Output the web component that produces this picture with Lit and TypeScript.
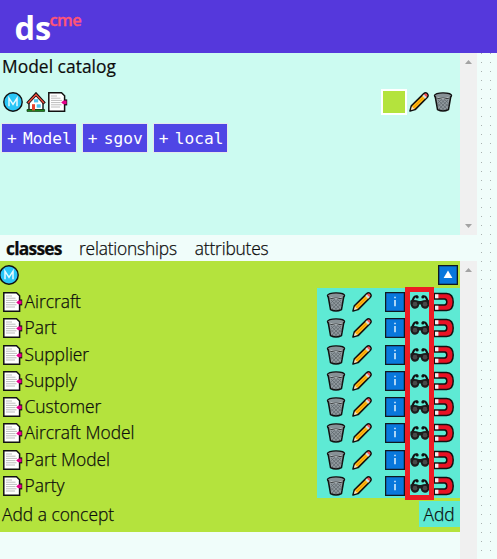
import { LitElement, html, css, svg } from "lit";
import { customElement, property } from "lit/decorators.js";

const glyphs: Record<string, any> = {
  doc: svg`<path d="M.8 .8H13.5L16.6 3.8V19.2H.8Z" fill="#fff" stroke="#111" stroke-width="1.5"/>
    <path d="M3 4H9M3 6.2H12.5M3 8.4H14M3 10.6H12.5M3 12.8H13.5M3 15H12" stroke="#bdbdbd" stroke-width="1"/>
    <path d="M16.6 7.4H19.2V13.4H16.6Z" fill="#111"/><path d="M13.2 10.4L15.4 8.6H18.6V12.2H15.4Z" fill="#e6008a"/>`,
  model: svg`<circle cx="10" cy="10" r="9.2" fill="#2ac6f7" stroke="#111" stroke-width="1.4"/>
    <path d="M6 14.3V6.2L10 12.3L14 6.2V14.3" fill="none" stroke="#e6faff" stroke-width="1.5"/>`,
  house: svg`<path d="M3 10.5L10 3.2L17 10.5V18H3Z" fill="#fff" stroke="#111" stroke-width="1.4"/>
    <path d="M1.4 11.5L10 2.2L18.6 11.5" fill="none" stroke="#111" stroke-width="3.2"/>
    <path d="M2 11L10 2.6L18 11" fill="none" stroke="#ef4b3c" stroke-width="1.5"/>
    <path d="M1 17.5H18.6V19.4H1Z" fill="#1e8a1e" stroke="#123c12" stroke-width=".8"/>
    <rect x="6" y="12.2" width="3" height="6.2" fill="#e8442e"/>
    <rect x="10.7" y="12.3" width="4" height="3.4" fill="#4cc3f0"/><rect x="8" y="7.2" width="4.2" height="3.2" fill="#4cc3f0"/>`,
  trash: svg`<path d="M2.2 4.5L4.5 17.5Q10 20.5 15.5 17.5L17.8 4.5Z" fill="#8f989d" stroke="#111" stroke-width="1.5"/>
    <path d="M5 8L14.5 17.5M8 7.5L15.6 14.8M11.5 7.5L16.2 11.8M4.8 11.5L11.2 18M15 8L5.5 17.5M12 7.5L4.6 14.8M8.5 7.5L4 11.8M15.2 11.5L8.8 18" stroke="#5d666b" stroke-width=".7"/>
    <ellipse cx="10" cy="3.6" rx="8.6" ry="2.8" fill="#879196" stroke="#111" stroke-width="1.3"/>
    <path d="M3 5Q10 8 17 5" fill="none" stroke="#b4bcc0" stroke-width="1"/>`,
  pencil: svg`<path d="M1 19L2.4 13.8L14.8 1.6Q16.5 .2 18.3 1.7Q19.8 3.5 18.4 5.2L6.1 17.6Z" fill="#ffb812" stroke="#111" stroke-width="1.6" stroke-linejoin="round"/>
    <path d="M2.9 14.5L5.4 17L1.9 18.1Z" fill="#f5e2cf"/>
    <path d="M13.3 3.9L15 2.2L17.8 5L16.1 6.7Z" fill="#d5dce0"/>
    <path d="M15 2.4Q16.6 .9 17.9 2.1Q19.1 3.5 17.6 5Z" fill="#f04858"/>
    <path d="M4.6 15.4L13.8 6.2" stroke="#f09000" stroke-width=".8"/>`,
  info: svg`<rect x=".6" y=".6" width="18.8" height="18.8" fill="#0877dc" stroke="#101820" stroke-width="1.3"/>
    <path d="M10 8V14.2M10 4.8V6.3" stroke="#d4ebfc" stroke-width="1.6"/>`,
  up: svg`<rect x=".6" y=".6" width="18.8" height="18.8" fill="#0877dc" stroke="#101820" stroke-width="1.4"/><path d="M10 5.6L14.4 13H5.6Z" fill="#fff"/>`,
  glasses: svg`<path d="M1.8 10L4 5.4Q4.8 3.8 7.4 4.4M18.2 10L16 5.4Q15.2 3.8 12.6 4.4" fill="none" stroke="#111" stroke-width="2.2"/>
    <circle cx="7.2" cy="5" r="1.5" fill="#111"/><circle cx="12.8" cy="5" r="1.5" fill="#111"/>
    <path d="M.4 8.4Q5 7.2 9 9H11Q15 7.2 19.6 8.4V12Q18.6 16.9 14.8 16.7Q11.2 16.4 10.8 12.6H9.2Q8.8 16.4 5.2 16.7Q1.4 16.9 .4 12Z" fill="#1c1c1c"/>
    <ellipse cx="5" cy="12.2" rx="2.3" ry="2.4" fill="#484848"/><ellipse cx="15" cy="12.2" rx="2.3" ry="2.4" fill="#484848"/>`,
  magnet: svg`<path d="M.6 1.4H12.6Q19.2 1.8 19.2 10Q19.2 18.2 12.6 18.6H.6V13H10.6Q12.8 12.8 12.8 10Q12.8 7.2 10.6 7H.6Z" fill="#e81224" stroke="#111" stroke-width="1.5"/>
    <path d="M1 2.2H4.4V6.2H1ZM1 13.8H4.4V17.8H1Z" fill="#eef1f3"/>`,
};

@customElement("ui-icon")
export class UiIcon extends LitElement {
  @property() name = "doc";
  static styles = css`
    :host { display: block; width: 20px; height: 20px; flex: none; }
    svg { display: block; width: 20px; height: 20px; }
  `;
  render() {
    return html`<svg viewBox="0 0 20 20">${glyphs[this.name]}</svg>`;
  }
}

@customElement("scroll-track")
export class ScrollTrack extends LitElement {
  @property({ type: Boolean }) down = false;
  static styles = css`
    :host { display: flex; flex-direction: column; justify-content: space-between; align-items: center;
      width: 17px; flex: none; background: #f0f0f0; }
    svg { display: block; width: 17px; height: 17px; }
  `;
  render() {
    return html`<svg viewBox="0 0 17 17"><path d="M5 11L8.5 7L12 11Z" fill="#a3a3a3" /></svg>
      ${this.down ? html`<svg viewBox="0 0 17 17"><path d="M5 6L8.5 10L12 6Z" fill="#a3a3a3" /></svg>` : ""}`;
  }
}

@customElement("app-root")
export class AppRoot extends LitElement {
  static styles = css`
    :host { display: flex; flex-direction: column; width: 497px; height: 559px; overflow: hidden;
      background: #f0fdfa; color: #0c0c0c; font-family: "Open Sans", "Noto Sans", sans-serif; font-size: 17.4px; }
    * { box-sizing: border-box; }
    header { display: flex; height: 53px; flex: none; padding-left: 14.5px; background: #5538dc; color: #fff; }
    .brand { width: 35px; font-size: 32.5px; font-weight: 700; line-height: 56px; }
    .sup { font-size: 16.5px; font-weight: 600; line-height: 40px; letter-spacing: -.6px; color: #ff5576; -webkit-text-stroke: .3px; }
    .body { display: flex; flex: 1; }
    .side { display: flex; flex-direction: column; width: 477px; }
    .catalog { display: flex; height: 182px; flex: none; }
    .panel { flex: 1; background: #ccfbf1; }
    .title { height: 28px; padding-left: 2px; line-height: 27px; letter-spacing: .03px; -webkit-text-stroke: .2px; }
    .tools { display: flex; align-items: center; height: 42px; padding: 0 7px 0 3px; }
    .tools ui-icon { margin-right: 2.5px; }
    .swatch { width: 26px; height: 26px; margin: -1px 1px 0 auto; border: 2px solid #fff; background: #b4e33d; }
    .tools .end { margin: 0 0 0 4px; }
    .tools .first { margin-left: 1px; }
    .buttons { display: flex; gap: 5px; padding: 0 0 0 1px; }
    .btn { display: flex; height: 30px; border: 1px solid #e5e7eb; background: #4f46e5; color: #fff; padding: 0 4px 0 5px;
      font: 16.2px/29px "DejaVu Sans Mono", monospace; }
    .plus { width: 16px; }
    .tabs { display: flex; height: 26px; flex: none; padding-left: 6px; gap: 18px; line-height: 27px; font-weight: 300;
      letter-spacing: -.2px; -webkit-text-stroke: .25px; }
    .tabs .on { width: 55px; font-weight: 700; letter-spacing: -.75px; }
    .list { display: flex; flex: 1; }
    .classes { width: 460px; height: 271px; background: #b4e33d; font-weight: 300; -webkit-text-stroke: .25px; }
    .top { display: flex; justify-content: space-between; height: 27px; padding: 4px 2px 0 0; }
    .top .m { margin-left: -1px; }
    .rows { position: relative; }
    .row { display: flex; height: 26.3px; line-height: 26px; }
    .row .doc { margin: 4px 1.5px 0 3px; }
    .acts { display: flex; width: 143px; margin-left: auto; padding: 4px 0 0 9px; gap: 6px; background: #5eead4; }
    .acts .i { margin-left: 7px; }
    .acts .g, .acts .u { margin-left: -1.5px; }
    .mark { position: absolute; left: 405px; top: -1px; width: 29px; height: 213px; border: 5px solid #ed1c24; }
    .foot { display: flex; justify-content: space-between; padding: 2.6px 0 0 2px; line-height: 27px; }
    .add { width: 41px; height: 26px; padding-left: 4.5px; background: #5eead4; }
    .dots { width: 20px; flex: none; }
  `;

  render() {
    const buttons = ["Model", "sgov", "local"];
    const names = ["Aircraft", "Part", "Supplier", "Supply", "Customer", "Aircraft Model", "Part Model", "Party"];
    const dots = Array.from({ length: 56 }, (_, i) => Math.round(i * 9.045));
    return html`
      <header><span class="brand">ds</span><span class="sup">cme</span></header>
      <div class="body">
        <div class="side">
          <section class="catalog">
            <div class="panel">
              <div class="title"><span>Model catalog</span></div>
              <div class="tools">
                <ui-icon name="model"></ui-icon><ui-icon name="house"></ui-icon><ui-icon name="doc"></ui-icon>
                <span class="swatch"></span><ui-icon class="end first" name="pencil"></ui-icon><ui-icon class="end" name="trash"></ui-icon>
              </div>
              <div class="buttons">${buttons.map((b) => html`<span class="btn"><span class="plus">+</span> <span>${b}</span></span>`)}</div>
            </div>
            <scroll-track down></scroll-track>
          </section>
          <nav class="tabs"><span class="on">classes</span><span>relationships</span><span>attributes</span></nav>
          <section class="list">
            <div class="classes">
              <div class="top"><ui-icon class="m" name="model"></ui-icon><ui-icon name="up"></ui-icon></div>
              <div class="rows">
                ${names.map((n) => html`<div class="row"><ui-icon class="doc" name="doc"></ui-icon><span>${n}</span>
                  <div class="acts"><ui-icon name="trash"></ui-icon><ui-icon name="pencil"></ui-icon><ui-icon class="i" name="info"></ui-icon><ui-icon class="g" name="glasses"></ui-icon><ui-icon class="u" name="magnet"></ui-icon></div></div>`)}
                <div class="mark"></div>
              </div>
              <div class="foot"><span>Add a concept</span><span class="add">Add</span></div>
            </div>
            <scroll-track></scroll-track>
          </section>
        </div>
        <svg class="dots" viewBox="0 0 20 506" height="506" shape-rendering="crispEdges">
          ${dots.map((y) => svg`<rect x="4" y=${y} width="1" height="1" fill="#a9b2b0"/><rect x="13" y=${y} width="1" height="1" fill="#a9b2b0"/>`)}
        </svg>
      </div>
    `;
  }
}
